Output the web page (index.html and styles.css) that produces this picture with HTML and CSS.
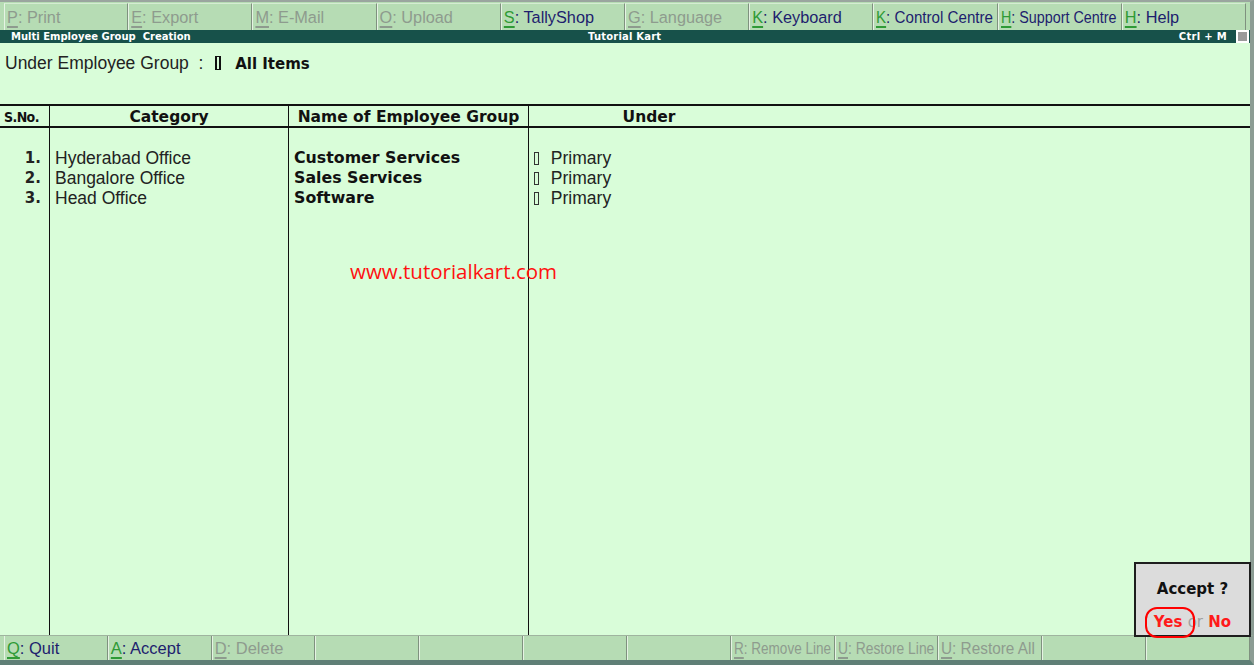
FILE: index.html
```html
<!DOCTYPE html>
<html lang="en">
<head>
  <meta charset="UTF-8" />
  <title>Multi Employee Group Creation</title>
  <link rel="stylesheet" href="styles.css">
</head>
<body>
  <div class="screen">
    <div class="menubar">
      <div class="btn off"><u>P</u>: Print</div>
      <div class="btn off"><u>E</u>: Export</div>
      <div class="btn off"><u>M</u>: E-Mail</div>
      <div class="btn off"><u>O</u>: Upload</div>
      <div class="btn"><u>S</u>: TallyShop</div>
      <div class="btn off"><u>G</u>: Language</div>
      <div class="btn"><u>K</u>: Keyboard</div>
      <div class="btn"><span class="sq93"><u>K</u>: Control Centre</span></div>
      <div class="btn"><span class="sq88"><u>H</u>: Support Centre</span></div>
      <div class="btn"><u>H</u>: Help</div>
    </div>

    <div class="titlebar">
      <span class="title-left">Multi Employee Group&nbsp; Creation</span>
      <span class="title-mid">Tutorial Kart</span>
      <span class="title-right">Ctrl + M</span>
      <span class="closebox"></span>
    </div>

    <div class="main">
      <div class="filter">
        Under Employee Group &nbsp;: &nbsp;<span class="box heavy"></span><b>All Items</b>
      </div>

      <div class="table">
        <div class="th sno">S.No.</div>
        <div class="th">Category</div>
        <div class="th">Name of Employee Group</div>
        <div class="th"><span class="under-head">Under</span></div>

        <div class="td nums">
          <div>1.</div>
          <div>2.</div>
          <div>3.</div>
        </div>
        <div class="td">
          <div>Hyderabad Office</div>
          <div>Bangalore Office</div>
          <div>Head Office</div>
        </div>
        <div class="td names">
          <div>Customer Services</div>
          <div>Sales Services</div>
          <div>Software</div>
        </div>
        <div class="td under">
          <div><span class="box"></span> Primary</div>
          <div><span class="box"></span> Primary</div>
          <div><span class="box"></span> Primary</div>
        </div>
      </div>

      <div class="watermark">www.tutorialkart.com</div>

      <div class="accept">
        <div class="accept-q">Accept ?</div>
        <div class="accept-a"><span class="yes">Yes</span> <span class="or">or</span> No</div>
      </div>
    </div>

    <div class="bottombar">
      <div class="btn"><u>Q</u>: Quit</div>
      <div class="btn"><u>A</u>: Accept</div>
      <div class="btn off"><u>D</u>: Delete</div>
      <div class="btn"></div>
      <div class="btn"></div>
      <div class="btn"></div>
      <div class="btn"></div>
      <div class="btn off"><span class="sq82"><u>R</u>: Remove Line</span></div>
      <div class="btn off"><span class="sq84"><u>U</u>: Restore Line</span></div>
      <div class="btn off"><span class="sq93"><u>U</u>: Restore All</span></div>
      <div class="btn"></div>
      <div class="btn"></div>
    </div>
  </div>
</body>
</html>
```

FILE: styles.css
```css
body {
  margin: 0;
  padding: 0;
  font-family: "Liberation Sans", Arial, sans-serif;
  background-color: #d9fdd9;
}
.screen {
  width: 1254px;
  height: 665px;
  display: flex;
  flex-direction: column;
  overflow: hidden;
}

/* button bars */
.menubar, .bottombar {
  display: flex;
  background-color: #b6dcb4;
  padding: 0 4px 0 4px;
  border-right: 4px solid #8c9c94;
}
.menubar {
  height: 27px;
  padding-top: 1px;
  border-top: 2px solid #9aa59f;
}
.bottombar {
  height: 24px;
  padding-right: 0;
  border-top: 1px solid #9fb49f;
  border-bottom: 5px solid #5f7f76;
}
.btn {
  flex: 1;
  min-width: 0;
  white-space: nowrap;
  overflow: hidden;
  font-size: 16.3px;
  line-height: 26px;
  padding-left: 2px;
  color: #1e1e6e;
  border-left: 1px solid #e6f3e4;
  border-right: 1px solid #7f917f;
  border-top: 1px solid #d4ecd2;
}
.bottombar .btn {
  font-size: 16.5px;
  line-height: 24px;
  border-top: none;
}
.btn u {
  color: #2f9a36;
  text-decoration-thickness: 2px;
  text-underline-offset: 3px;
}
.btn.off, .btn.off u {
  color: #8e9b8e;
}
.sq93, .sq88, .sq84, .sq82 {
  display: inline-block;
  transform-origin: left center;
}
.sq93 { transform: scaleX(0.93); }
.sq88 { transform: scaleX(0.88); }
.sq84 { transform: scaleX(0.84); }
.sq82 { transform: scaleX(0.82); }

/* title */
.titlebar {
  height: 13px;
  display: flex;
  align-items: center;
  background-color: #17514a;
  color: #ffffff;
  font-family: "DejaVu Sans", sans-serif;
  font-weight: bold;
  font-size: 10px;
  padding-left: 11px;
  border-right: 4px solid #8c9c94;
}
.title-left {
  width: 577px;
}
.title-mid {
  flex: 1;
  letter-spacing: 0.2px;
}
.title-right {
  margin-right: 9px;
  letter-spacing: 0.3px;
}
.closebox {
  width: 9px;
  height: 9px;
  background-color: #9a9a9a;
  border: 2px solid #ffffff;
  margin-right: 1px;
}

/* main */
.main {
  flex: 1;
  position: relative;
  display: flex;
  flex-direction: column;
  border-right: 4px solid #8c9c94;
  color: #222;
}
.filter {
  height: 61px;
  padding: 10px 0 0 5px;
  box-sizing: border-box;
  font-size: 17.5px;
}
.filter b {
  font-family: "DejaVu Sans", sans-serif;
  font-size: 15px;
  color: #111;
}
.box {
  display: inline-block;
  width: 3px;
  height: 11px;
  border: 1px solid #333;
  margin: 0 7px 0 5px;
  vertical-align: -1px;
}
.box.heavy {
  width: 2px;
  height: 12px;
  margin: 0 14px 0 2px;
  border-width: 1px 2px;
  border-color: #111;
}

.table {
  flex: 1;
  display: grid;
  grid-template-columns: 49px 239px 240px 1fr;
  grid-template-rows: 22px 1fr;
  border-top: 2px solid #111;
}
.th {
  border-bottom: 2px solid #111;
  text-align: center;
  font-family: "DejaVu Sans", sans-serif;
  font-weight: bold;
  font-size: 15.5px;
  line-height: 22px;
  color: #111;
}
.th + .th, .td + .td {
  border-left: 1px solid #111;
}
.th.sno {
  font-family: "DejaVu Sans Condensed", "DejaVu Sans", sans-serif;
  font-stretch: condensed;
  font-size: 14px;
  text-align: left;
  padding-left: 4px;
  letter-spacing: -0.6px;
}
.under-head {
  display: block;
  width: 240px;
}
.td {
  padding-top: 20px;
  font-size: 17.5px;
  line-height: 20px;
}
.td.nums {
  text-align: right;
  padding-right: 8px;
  font-weight: bold;
  font-family: "DejaVu Sans", sans-serif;
  font-size: 15px;
}
.td:nth-child(6) {
  padding-left: 5px;
}
.td.names {
  padding-left: 5px;
  font-family: "DejaVu Sans", sans-serif;
  font-weight: bold;
  font-size: 15.8px;
  color: #111;
}
.td.under {
  padding-left: 0;
}

.watermark {
  position: absolute;
  left: 350px;
  top: 214px;
  color: #ff1010;
  font-family: "Open Sans", sans-serif;
  font-size: 20.5px;
}

.accept {
  position: absolute;
  left: 1134px;
  top: 519px;
  width: 113px;
  height: 71px;
  background-color: #dcdcdc;
  border: 2px solid #1e1e1e;
  text-align: center;
  font-family: "DejaVu Sans", sans-serif;
  font-weight: bold;
}
.accept-q {
  font-size: 15px;
  color: #111;
  margin-top: 16px;
}
.accept-a {
  margin-top: 15px;
  font-size: 15px;
  color: #ff1a1a;
}
.accept-a .or {
  color: #a0a0a0;
  font-weight: normal;
}
.yes {
  position: relative;
}
.yes::after {
  content: "";
  position: absolute;
  left: -9px;
  top: -6px;
  width: 46px;
  height: 27px;
  border: 2px solid #ff0000;
  border-radius: 12px;
}
```
